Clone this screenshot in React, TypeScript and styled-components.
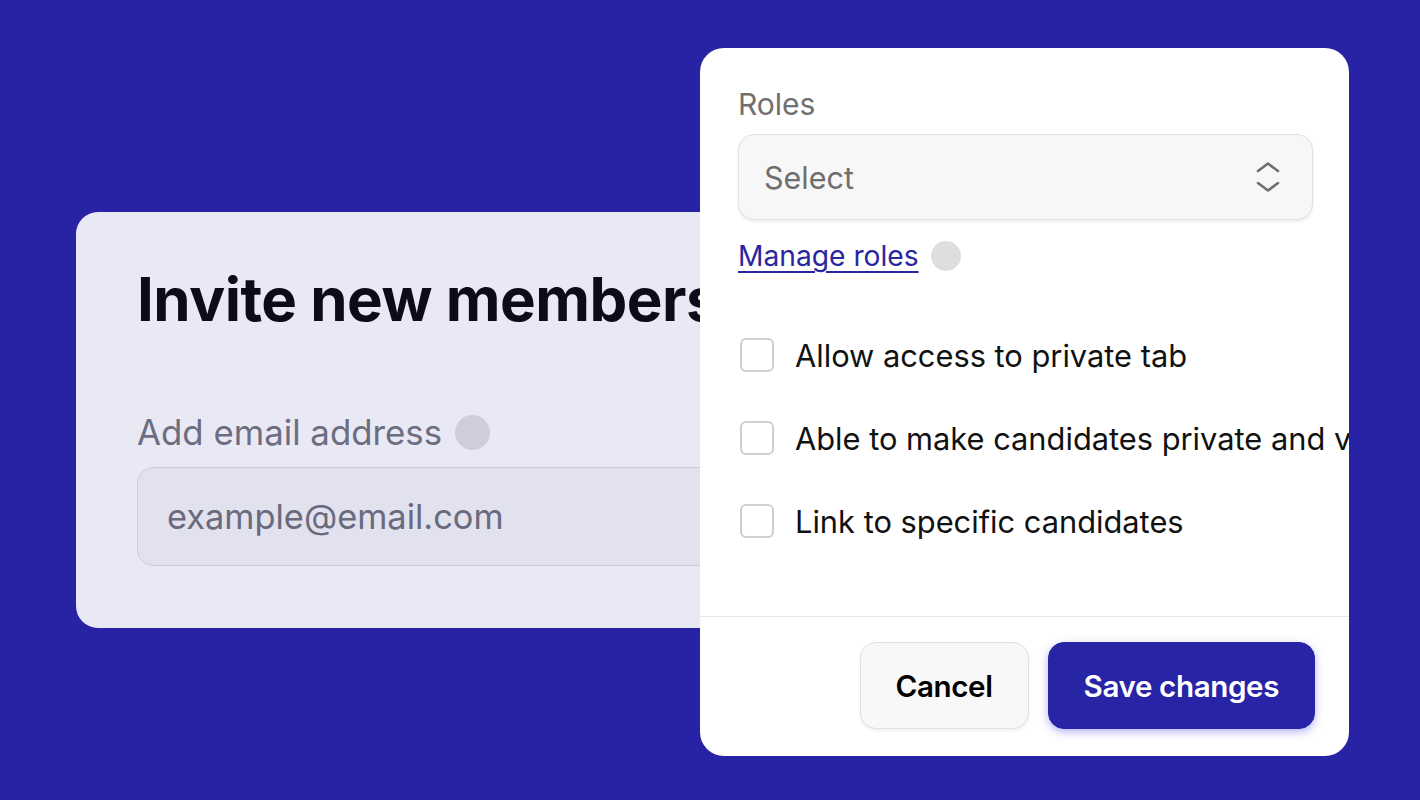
import styled, { createGlobalStyle } from "styled-components";

const GlobalStyle = createGlobalStyle`
    html, body {
        margin: 0;
        padding: 0;
        background: #2823a4;
    }
    * {
        box-sizing: border-box;
    }
    body {
        font-family: Inter, "Noto Sans", "Liberation Sans", sans-serif;
    }
`

const Stage = styled.div`
    position: relative;
    width: 1420px;
    height: 800px;
    overflow: hidden;
    background: #2823a4;
`

// the two cards sit over one another, like windows on a desktop
const InviteCard = styled.div`
    position: absolute;
    left: 76px;
    top: 212px;
    width: 1000px;
    height: 416px;
    padding: 51px 61px 0 61px;
    border-radius: 22px;
    background: #e9e9f6;
    display: flex;
    flex-direction: column;
`

const Title = styled.h1`
    margin: 0;
    font-size: 60px;
    line-height: 72px;
    font-weight: 700;
    letter-spacing: -0.5px;
    color: #0b0b1a;
`

const FieldLabel = styled.div`
    margin-top: 77px;
    display: flex;
    align-items: center;
    gap: 13px;
    font-size: 34.8px;
    line-height: 41px;
    color: #6d6d80;
`

const Dot = styled.span<{ size: number; color: string }>`
    display: inline-block;
    width: ${props => props.size}px;
    height: ${props => props.size}px;
    border-radius: 50%;
    background: ${props => props.color};
    flex-shrink: 0;
`

const EmailInput = styled.div`
    margin-top: 14px;
    height: 99px;
    padding-left: 29px;
    display: flex;
    align-items: center;
    border: 1px solid #cbcbdc;
    border-radius: 16px;
    background: #e2e2ef;
    font-size: 34.4px;
    color: #6a6a7e;
`

const Panel = styled.div`
    position: absolute;
    left: 700px;
    top: 48px;
    width: 649px;
    height: 708px;
    border-radius: 24px;
    background: #ffffff;
    overflow: hidden;
    display: flex;
    flex-direction: column;
`

const PanelBody = styled.div`
    flex: 1;
    padding: 38px 36px 0 38px;
    display: flex;
    flex-direction: column;
`

const Label = styled.div`
    font-size: 30px;
    line-height: 36px;
    color: #707070;
`

const SelectBox = styled.div`
    margin-top: 12px;
    height: 86px;
    padding: 0 32px 0 25px;
    display: flex;
    align-items: center;
    justify-content: space-between;
    border: 1px solid #e1e1e1;
    border-radius: 16px;
    background: #f7f7f7;
    box-shadow: 0 2px 3px rgba(0, 0, 0, 0.07);
    font-size: 30.5px;
    color: #6e6e6e;
`

const ManageRow = styled.div`
    margin-top: 18px;
    display: flex;
    align-items: center;
    gap: 12px;
`

const Link = styled.a`
    font-size: 28.2px;
    line-height: 36px;
    color: #2a26a0;
    text-decoration: underline;
    text-decoration-thickness: 2px;
    text-underline-offset: 5px;
`

const Options = styled.div`
    margin-top: 64px;
    display: flex;
    flex-direction: column;
    gap: 49px;
`

const OptionRow = styled.label`
    display: flex;
    align-items: center;
    gap: 21px;
    height: 34px;
    padding-left: 2px;
    white-space: nowrap;
    font-size: 30.8px;
    color: #111111;
`

const Box = styled.span`
    width: 34px;
    height: 34px;
    flex-shrink: 0;
    border: 2px solid #cfcfcf;
    border-radius: 6px;
    background: #ffffff;
`

const Footer = styled.div`
    height: 140px;
    border-top: 1px solid #e6e6e6;
    padding: 25px 34px 0 0;
    display: flex;
    justify-content: flex-end;
    align-items: flex-start;
    gap: 19px;
`

const Button = styled.button<{ primary?: boolean }>`
    height: 87px;
    padding: 0 35px;
    border-radius: 16px;
    font-family: inherit;
    font-size: 29.6px;
    font-weight: 600;
    letter-spacing: -0.4px;
    border: 1px solid ${props => props.primary ? "#2824a6" : "#e1e1e1"};
    background: ${props => props.primary ? "#2824a6" : "#f8f8f8"};
    color: ${props => props.primary ? "#ffffff" : "#000000"};
    box-shadow: ${props => props.primary
        ? "0 3px 8px rgba(90, 86, 230, 0.45)"
        : "0 2px 3px rgba(0, 0, 0, 0.06)"};
`

const UpDown = () => (
    <svg width="24" height="32" viewBox="0 0 24 32" fill="none" stroke="#6f6f6f" strokeWidth="2.6" strokeLinecap="round" strokeLinejoin="round">
        <path d="M2 10 L12 2.5 L22 10" />
        <path d="M2 22 L12 29.5 L22 22" />
    </svg>
)

const options = [
    "Allow access to private tab",
    "Able to make candidates private and view private candidates",
    "Link to specific candidates",
]

export default function App() {
    return (
        <>
            <GlobalStyle />
            <Stage>
                <InviteCard>
                    <Title>Invite new members</Title>
                    <FieldLabel>
                        Add email address
                        <Dot size={35} color="#cdcddb" />
                    </FieldLabel>
                    <EmailInput>example@email.com</EmailInput>
                </InviteCard>

                <Panel>
                    <PanelBody>
                        <Label>Roles</Label>
                        <SelectBox>
                            Select
                            <UpDown />
                        </SelectBox>
                        <ManageRow>
                            <Link>Manage roles</Link>
                            <Dot size={30} color="#dedede" />
                        </ManageRow>
                        <Options>
                            {options.map(text => (
                                <OptionRow key={text}>
                                    <Box />
                                    {text}
                                </OptionRow>
                            ))}
                        </Options>
                    </PanelBody>
                    <Footer>
                        <Button>Cancel</Button>
                        <Button primary>Save changes</Button>
                    </Footer>
                </Panel>
            </Stage>
        </>
    )
}
